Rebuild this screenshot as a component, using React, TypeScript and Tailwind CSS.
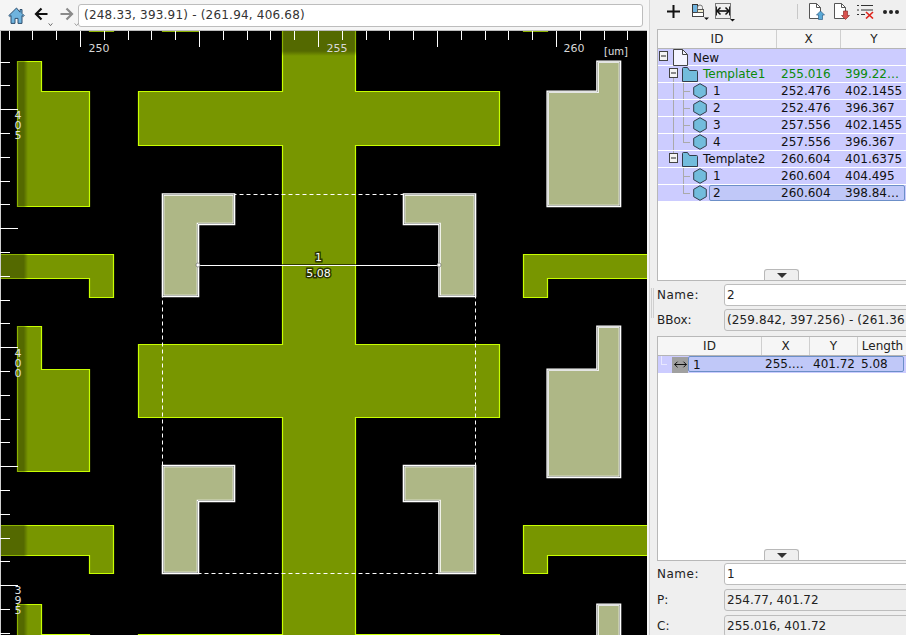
import type { ReactNode } from "react";

const GREEN_SHAPES = [
  "17.5,61.5 41.5,61.5 41.5,91.5 89.5,91.5 89.5,206.5 17.5,206.5",
  "17.5,326.5 41.5,326.5 41.5,369.5 89.5,369.5 89.5,471.5 17.5,471.5",
  "17.5,604.5 41.5,604.5 41.5,634.5 89.5,634.5 89.5,660 17.5,660",
  "-5,254.5 113.5,254.5 113.5,297.5 89.5,297.5 89.5,278.5 -5,278.5",
  "-5,525.5 113.5,525.5 113.5,573.5 89.5,573.5 89.5,555.5 -5,555.5",
  "523.5,254.5 660,254.5 660,278.5 547.5,278.5 547.5,297.5 523.5,297.5",
  "523.5,525.5 660,525.5 660,555.5 547.5,555.5 547.5,573.5 523.5,573.5",
  "89.5,10 113.5,10 113.5,31.5 89.5,31.5",
  "162.5,10 198.5,10 198.5,31.5 162.5,31.5",
  "523.5,10 547.5,10 547.5,31.5 523.5,31.5",
  "138.5,634.5 499.5,634.5 499.5,660 138.5,660",
  "282.5,10 355.5,10 355.5,91.5 499.5,91.5 499.5,145.5 355.5,145.5 355.5,344.5 499.5,344.5 499.5,417.5 355.5,417.5 355.5,660 282.5,660 282.5,417.5 138.5,417.5 138.5,344.5 282.5,344.5 282.5,145.5 138.5,145.5 138.5,91.5 282.5,91.5",
];

const GRAY_SHAPES = [
  "597.5,61.7 620,61.7 620,206 547.7,206 547.7,91.7 597.5,91.7",
  "597.5,326.7 620,326.7 620,477 547.7,477 547.7,369.7 597.5,369.7",
  "597.5,604.7 620,604.7 620,660 597.5,660",
  "163,194.5 234,194.5 234,224 198,224 198,296 163,296",
  "404,194.5 475,194.5 475,296 439.5,296 439.5,224 404,224",
  "163,466 234,466 234,501 198,501 198,573 163,573",
  "404,466 475,466 475,573 439.5,573 439.5,501 404,501",
];

const TOP_TICKS = Array.from({ length: 27 }, (_, i) => Math.round(8.6 + 23.8 * i));
const LEFT_TICKS = Array.from({ length: 25 }, (_, i) => Math.round(61.6 + 23.8 * i));

const LEFT_LABELS = [
  { digits: "405", y: 119 },
  { digits: "400", y: 357 },
  { digits: "395", y: 594 },
];

function Canvas() {
  return (
    <svg viewBox="0 31 647 604" className="block w-[647px] h-[604px] bg-black">
      <defs>
        <linearGradient id="fadeLeft" x1="0" x2="1" y1="0" y2="0">
          <stop offset="0.85" stopColor="#000" stopOpacity="0.3" />
          <stop offset="1" stopColor="#000" stopOpacity="0" />
        </linearGradient>
        <linearGradient id="fadeTop" x1="0" x2="0" y1="0" y2="1">
          <stop offset="0.8" stopColor="#000" stopOpacity="0.3" />
          <stop offset="1" stopColor="#000" stopOpacity="0" />
        </linearGradient>
        {GRAY_SHAPES.map((p, i) => (
          <clipPath key={p} id={`shape${i}`}>
            <polygon points={p} />
          </clipPath>
        ))}
      </defs>
      {GREEN_SHAPES.map((p) => (
        <polygon key={p} points={p} fill="#789600" stroke="#c8ff00" strokeWidth="1.2" />
      ))}
      <rect x="0" y="31" width="28" height="604" fill="url(#fadeLeft)" />
      <rect x="0" y="31" width="648" height="25" fill="url(#fadeTop)" />
      <rect x="162.5" y="194.5" width="313" height="379" fill="none" stroke="#fff" strokeDasharray="4 3" />
      {GRAY_SHAPES.map((p, i) => (
        <g key={p}>
          <polygon points={p} fill="#aeb786" stroke="#ffffff" strokeWidth="2.6" />
          <polygon points={p} fill="none" stroke="#5f6458" strokeWidth="0.9" clipPath={`url(#shape${i})`} />
        </g>
      ))}

      {/* measurement */}
      <line x1="198" x2="439" y1="264.5" y2="264.5" stroke="#000" strokeOpacity="0.6" strokeWidth="1" />
      <line x1="198" x2="439" y1="265.5" y2="265.5" stroke="#fff" strokeWidth="1" />
      <circle cx="198" cy="265" r="2" fill="#fff" stroke="#444" strokeWidth="0.5" />
      <circle cx="439" cy="265" r="2" fill="#fff" stroke="#444" strokeWidth="0.5" />
      <g fontSize="11" fill="#fff" textAnchor="middle" stroke="#000" strokeOpacity="0.65" strokeWidth="3" paintOrder="stroke">
        <text x="318.5" y="261">1</text>
        <text x="318.5" y="277">5.08</text>
      </g>

      {/* rulers */}
      <rect x="0" y="31" width="1" height="604" fill="#cfcfcf" />
      {TOP_TICKS.map((x, i) => (
        <line key={x} x1={x + 0.5} x2={x + 0.5} y1="31" y2={i % 5 === 3 ? 47 : 40} stroke="#fff" />
      ))}
      {LEFT_TICKS.map((y, i) => (
        <line key={y} x1="0" x2={i % 5 === 2 ? 18 : 10} y1={y + 0.5} y2={y + 0.5} stroke="#fff" />
      ))}
      <text x="99" y="52" textAnchor="middle" fontSize="11" fill="#d8d8d8">250</text>
      <text x="337" y="52" textAnchor="middle" fontSize="11" fill="#d8d8d8">255</text>
      <text x="574" y="52" textAnchor="middle" fontSize="11" fill="#d8d8d8">260</text>
      <text x="616" y="55" textAnchor="middle" fontSize="10" fill="#e0e0e0">[um]</text>
      {LEFT_LABELS.map(({ digits, y }) => (
        <text key={digits} fontSize="11" fill="#e0e0e0" textAnchor="middle">
          {digits.split("").map((d, i) => (
            <tspan key={i} x="18" y={y + i * 10}>
              {d}
            </tspan>
          ))}
        </text>
      ))}
    </svg>
  );
}

function HomeIcon() {
  return (
    <svg viewBox="0 0 17 17" className="w-[17px] h-[17px]">
      <path d="M8.5 1 .8 8.6l1 1 1.2-1.1v7.9h4v-5h3v5h4V8.5l1.2 1.1 1-1-2.2-2.2V2.5h-2v2.7z" fill="#6fb3de" stroke="#2f4f6e" strokeWidth="1" strokeLinejoin="round" />
    </svg>
  );
}

function NavArrow({ flip, color, chevron }: { flip?: boolean; color: string; chevron: string }) {
  return (
    <div className="relative w-[19px] h-[18px]">
      <svg viewBox="0 0 14 14" className={`w-[14px] h-[14px] mt-[1px] ${flip ? "scale-x-[-1]" : ""}`}>
        <path d="M13.5 7H2.5M7.5 1.5 2 7l5.5 5.5" fill="none" stroke={color} strokeWidth="2.2" />
      </svg>
      <svg viewBox="0 0 6 4" className="absolute right-0 bottom-[-1px] w-[5px] h-[3px]">
        <path d="M0.5 0.5 3 3.5 5.5 0.5" fill="none" stroke={chevron} strokeWidth="1" />
      </svg>
    </div>
  );
}

function DocIcon({ children }: { children?: ReactNode }) {
  return (
    <svg viewBox="0 0 16 17" className="w-[16px] h-[17px]">
      <path d="M.5.5h7l4 4v11H.5z" fill="#fff" stroke="#555" strokeWidth="1" />
      <path d="M7.5.5v4h4" fill="none" stroke="#555" strokeWidth="1" />
      {children}
    </svg>
  );
}

function RightToolbar() {
  return (
    <div className="h-[29px] pb-[6px] flex items-center shrink-0">
      <svg viewBox="0 0 13 13" className="ml-[17px] w-[13px] h-[13px]">
        <path d="M6.5 0v13M0 6.5h13" stroke="#111" strokeWidth="2" />
      </svg>
      <svg viewBox="0 0 18 16" className="ml-[12px] w-[18px] h-[16px]">
        <rect x="0.5" y="0.5" width="5" height="8" fill="#6fb3de" stroke="#333" />
        <path d="M5.5 6V3.5a2.5 2.5 0 0 1 5 0V6" fill="none" stroke="#777" />
        <rect x="0.5" y="8.5" width="11" height="4" fill="#fff" stroke="#444" />
        <rect x="5.5" y="5.5" width="6" height="3" fill="#f0eccd" stroke="#555" />
        <path d="M12 13.5h5L14.5 16z" fill="#111" />
      </svg>
      <svg viewBox="0 0 20 19" className="ml-[5px] w-[20px] h-[19px] mt-[2px]">
        <rect x="0.5" y="0.5" width="15" height="15" fill="none" stroke="#777" />
        <path d="M1.5 3.5v9M14.5 3.5v9" stroke="#222" strokeWidth="1" />
        <path d="M2 8h12" stroke="#111" strokeWidth="1.6" />
        <path d="M5.5 4.5 2 8l3.5 3.5M10.5 4.5 14 8l-3.5 3.5" fill="none" stroke="#111" strokeWidth="1.5" />
        <path d="M15 16h5l-2.5 2.5z" fill="#111" />
      </svg>
      <div className="ml-[62px] w-[1px] h-[15px] bg-[#c8c8c8]" />
      <div className="ml-[11px]">
        <DocIcon>
          <path d="M11.5 8l4 4h-2v4.5h-4V12h-2z" fill="#5aa9d6" stroke="#2f5f88" strokeWidth="0.7" />
        </DocIcon>
      </div>
      <div className="ml-[9px]">
        <DocIcon>
          <path d="M11.5 16.5l4-4h-2V8h-4v4.5h-2z" fill="#d9534f" stroke="#8f2f2c" strokeWidth="0.7" />
        </DocIcon>
      </div>
      <svg viewBox="0 0 17 15" className="ml-[7px] w-[17px] h-[15px]">
        <path d="M0 1.5h2M4 1.5h12M0 6h2M4 6h12M0 10.5h2M4 10.5h4" stroke="#333" strokeWidth="1" />
        <path d="M9 8l7 6.5M16 8l-7 6.5" stroke="#e0241c" strokeWidth="1.6" />
      </svg>
      <div className="ml-[9px] flex gap-[2px]">
        <div className="w-[4px] h-[4px] rounded-full bg-[#222]" />
        <div className="w-[4px] h-[4px] rounded-full bg-[#222]" />
        <div className="w-[4px] h-[4px] rounded-full bg-[#222]" />
      </div>
    </div>
  );
}

function HexIcon() {
  return (
    <svg viewBox="0 0 14 16" className="w-[14px] h-[16px] shrink-0">
      <path d="M7 .7 13.3 4.3v7.4L7 15.3.7 11.7V4.3z" fill="#72bcdc" stroke="#333c4a" strokeWidth="1" />
    </svg>
  );
}

function FolderIcon() {
  return (
    <svg viewBox="0 0 16 15" className="w-[16px] h-[15px] shrink-0">
      <path d="M.5 14.5V1.5a1 1 0 0 1 1-1h4l2 3h7a1 1 0 0 1 1 1v10z" fill="#72bcdc" stroke="#333c4a" strokeWidth="1" />
    </svg>
  );
}

function ExpandBox({ left }: { left: number }) {
  return (
    <svg viewBox="0 0 9 10" className="absolute top-[2px] w-[9px] h-[10px]" style={{ left }}>
      <rect x="0.5" y="0.5" width="8" height="9" fill="#f4f4f4" stroke="#444" />
      <path d="M2 5h5" stroke="#222" strokeWidth="1" />
    </svg>
  );
}

const GRID_ROW = "grid grid-cols-[119px_64px_66px] h-[17px] border-b border-white bg-[#ccccff] text-[12px] leading-[16px]";

function Row({
  id,
  x,
  y,
  color,
  kind,
  parentLine,
  last,
  selected,
}: {
  id: string;
  x: string;
  y: string;
  color?: string;
  kind: "root" | "folder" | "item";
  parentLine?: boolean;
  last?: boolean;
  selected?: boolean;
}) {
  return (
    <div className={`${GRID_ROW} ${color ?? "text-[#111]"} relative`}>
      {selected && (
        <div className="absolute left-[51px] right-[1px] top-0 h-[16px] rounded-[2px] border border-[#6c8fc8] bg-[#c0c8f8]" />
      )}
      <div className="relative flex items-center min-w-0">
        {kind === "root" && (
          <>
            <ExpandBox left={1} />
            <svg viewBox="0 0 15 17" className="ml-[15px] w-[15px] h-[17px] shrink-0">
              <path d="M.5.5h9l5 5v11H.5z" fill="#f4f4ff" stroke="#444" strokeWidth="1" />
              <path d="M9.5.5v5h5" fill="none" stroke="#444" strokeWidth="1" />
            </svg>
            <span className="ml-[5px]">{id}</span>
          </>
        )}
        {kind === "folder" && (
          <>
            {parentLine && <div className="absolute left-[15px] top-[12px] bottom-0 w-[1px] bg-[#aaa]" />}
            {last === true && <div className="absolute left-[15px] top-0 h-[3px] w-[1px] bg-[#aaa]" />}
            <ExpandBox left={11} />
            <div className="ml-[24px]">
              <FolderIcon />
            </div>
            <span className="ml-[5px]">{id}</span>
          </>
        )}
        {kind === "item" && (
          <>
            {parentLine && <div className="absolute left-[15px] top-0 bottom-0 w-[1px] bg-[#aaa]" />}
            <div className={`absolute left-[25px] top-0 w-[1px] bg-[#aaa] ${last ? "h-[9px]" : "bottom-0"}`} />
            <div className="absolute left-[25px] top-[8px] w-[7px] h-[1px] bg-[#aaa]" />
            <div className="ml-[35px]">
              <HexIcon />
            </div>
            <span className="ml-[6px] relative">{id}</span>
          </>
        )}
      </div>
      <div className="pl-[4px] relative whitespace-nowrap">{x}</div>
      <div className="pl-[4px] relative whitespace-nowrap">{y}</div>
    </div>
  );
}

function Splitter() {
  return (
    <div className="absolute bottom-0 left-[106px] w-[35px] h-[11px] rounded-t-[3px] border border-b-0 border-[#b8b8b8] bg-[#efefef] flex items-center justify-center">
      <svg viewBox="0 0 10 5" className="w-[10px] h-[5px]">
        <path d="M0 0h10L5 5z" fill="#333" />
      </svg>
    </div>
  );
}

function Field({ label, value, muted, labelClass, valueClass }: { label: string; value: string; muted?: boolean; labelClass?: string; valueClass?: string }) {
  return (
    <div className="flex items-center text-[12px] text-[#222]">
      <div className={`w-[67px] shrink-0 ${labelClass ?? ""}`}>{label}</div>
      <div
        className={`w-[190px] h-[22px] shrink-0 px-[2px] leading-[20px] rounded-[3px] border border-[#bdbdbd] whitespace-nowrap overflow-hidden ${
          muted ? "bg-[#eeeeee]" : "bg-white"
        } ${valueClass ?? ""}`}
      >
        {value}
      </div>
    </div>
  );
}

function HeaderCell({ label, last }: { label: string; last?: boolean }) {
  return (
    <div className={`flex items-center justify-center ${last ? "" : "border-r border-[#cfcfcf]"}`}>{label}</div>
  );
}

export default function App() {
  return (
    <div className="w-[906px] h-[635px] flex overflow-hidden bg-[#efefef] font-['DejaVu_Sans',sans-serif]">
      <div className="w-[647px] shrink-0 flex flex-col">
        <div className="h-[31px] shrink-0 flex items-center bg-[#f5f5f5] border-b border-[#bdbdbd]">
          <div className="ml-[8px]">
            <HomeIcon />
          </div>
          <div className="ml-[9px]">
            <NavArrow color="#111" chevron="#444" />
          </div>
          <div className="ml-[7px]">
            <NavArrow flip color="#8a8a8a" chevron="#888" />
          </div>
          <div className="ml-[-1px] w-[565px] h-[23px] px-[5px] leading-[21px] text-[12px] tracking-[0.2px] text-[#333] bg-white rounded-[3px] border border-[#bdbdbd]">
            (248.33, 393.91) - (261.94, 406.68)
          </div>
        </div>
        <Canvas />
      </div>

      <div className="w-[3px] shrink-0 bg-[#f6f6f6] border-r border-[#d4d4d4]" />

      <div className="w-[256px] shrink-0 flex flex-col">
        <RightToolbar />

        <div className="relative ml-[7px] w-[249px] h-[252px] shrink-0 bg-white border-t border-l border-b border-[#b8b8b8]">
          <div className="grid grid-cols-[119px_64px_66px] h-[19px] bg-[#f6f6f6] border-b border-[#b5b5b5] text-[12px] text-[#222]">
            <HeaderCell label="ID" />
            <HeaderCell label="X" />
            <HeaderCell label="Y" last />
          </div>
          <Row kind="root" id="New" x="" y="" />
          <Row kind="folder" id="Template1" x="255.016" y="399.22…" color="text-[#0a8a0a]" parentLine />
          <Row kind="item" id="1" x="252.476" y="402.1455" parentLine />
          <Row kind="item" id="2" x="252.476" y="396.367" parentLine />
          <Row kind="item" id="3" x="257.556" y="402.1455" parentLine />
          <Row kind="item" id="4" x="257.556" y="396.367" parentLine last />
          <Row kind="folder" id="Template2" x="260.604" y="401.6375" last />
          <Row kind="item" id="1" x="260.604" y="404.495" />
          <Row kind="item" id="2" x="260.604" y="398.84…" last selected />
          <Splitter />
        </div>

        <div className="flex mt-[3px] shrink-0">
          <div className="w-[7px] shrink-0 pl-[1px] pt-[4px]">
            <div className="w-[3px] h-[30px] border-x border-[#cfcfcf]" />
          </div>
          <div className="flex flex-col gap-[3px]">
            <Field label="Name:" value="2" labelClass="tracking-[0.5px]" />
            <Field label="BBox:" value="(259.842, 397.256) - (261.36" muted valueClass="tracking-[0.1px]" />
          </div>
        </div>

        <div className="relative ml-[7px] mt-[5px] w-[249px] h-[225px] shrink-0 bg-white border-t border-l border-b border-[#b8b8b8]">
          <div className="grid grid-cols-[104px_48px_48px_49px] h-[19px] bg-[#f6f6f6] border-b border-[#b5b5b5] text-[12px] text-[#222]">
            <HeaderCell label="ID" />
            <HeaderCell label="X" />
            <HeaderCell label="Y" />
            <HeaderCell label="Length" last />
          </div>
          <div className="relative grid grid-cols-[104px_48px_48px_49px] h-[17px] bg-[#ccccff] text-[12px] leading-[16px] text-[#111]">
            <div className="absolute left-[30px] right-[2px] top-0 h-[16px] rounded-[2px] border border-[#6c8fc8] bg-[#c0c8f8]" />
            <div className="relative flex items-center">
              <div className="absolute left-[3px] top-0 h-[9px] w-[6px] border-l border-b border-[#e8e8ff]" />
              <div className="ml-[14px] w-[16px] h-[16px] bg-[#a0a0a0] flex items-center justify-center">
                <svg viewBox="0 0 13 7" className="w-[13px] h-[7px]">
                  <path d="M.5 3.5h12M3.5.7.7 3.5l2.8 2.8M9.5.7l2.8 2.8-2.8 2.8" fill="none" stroke="#111" strokeWidth="1" />
                </svg>
              </div>
              <span className="ml-[5px]">1</span>
            </div>
            <div className="relative pl-[3px] whitespace-nowrap">255.…</div>
            <div className="relative pl-[3px] whitespace-nowrap">401.72</div>
            <div className="relative pl-[3px] whitespace-nowrap">5.08</div>
          </div>
          <Splitter />
        </div>

        <div className="ml-[7px] mt-[2px] flex flex-col gap-[4px] shrink-0">
          <Field label="Name:" value="1" labelClass="tracking-[0.5px]" />
          <Field label="P:" value="254.77, 401.72" muted />
          <Field label="C:" value="255.016, 401.72" muted />
        </div>
      </div>
    </div>
  );
}
